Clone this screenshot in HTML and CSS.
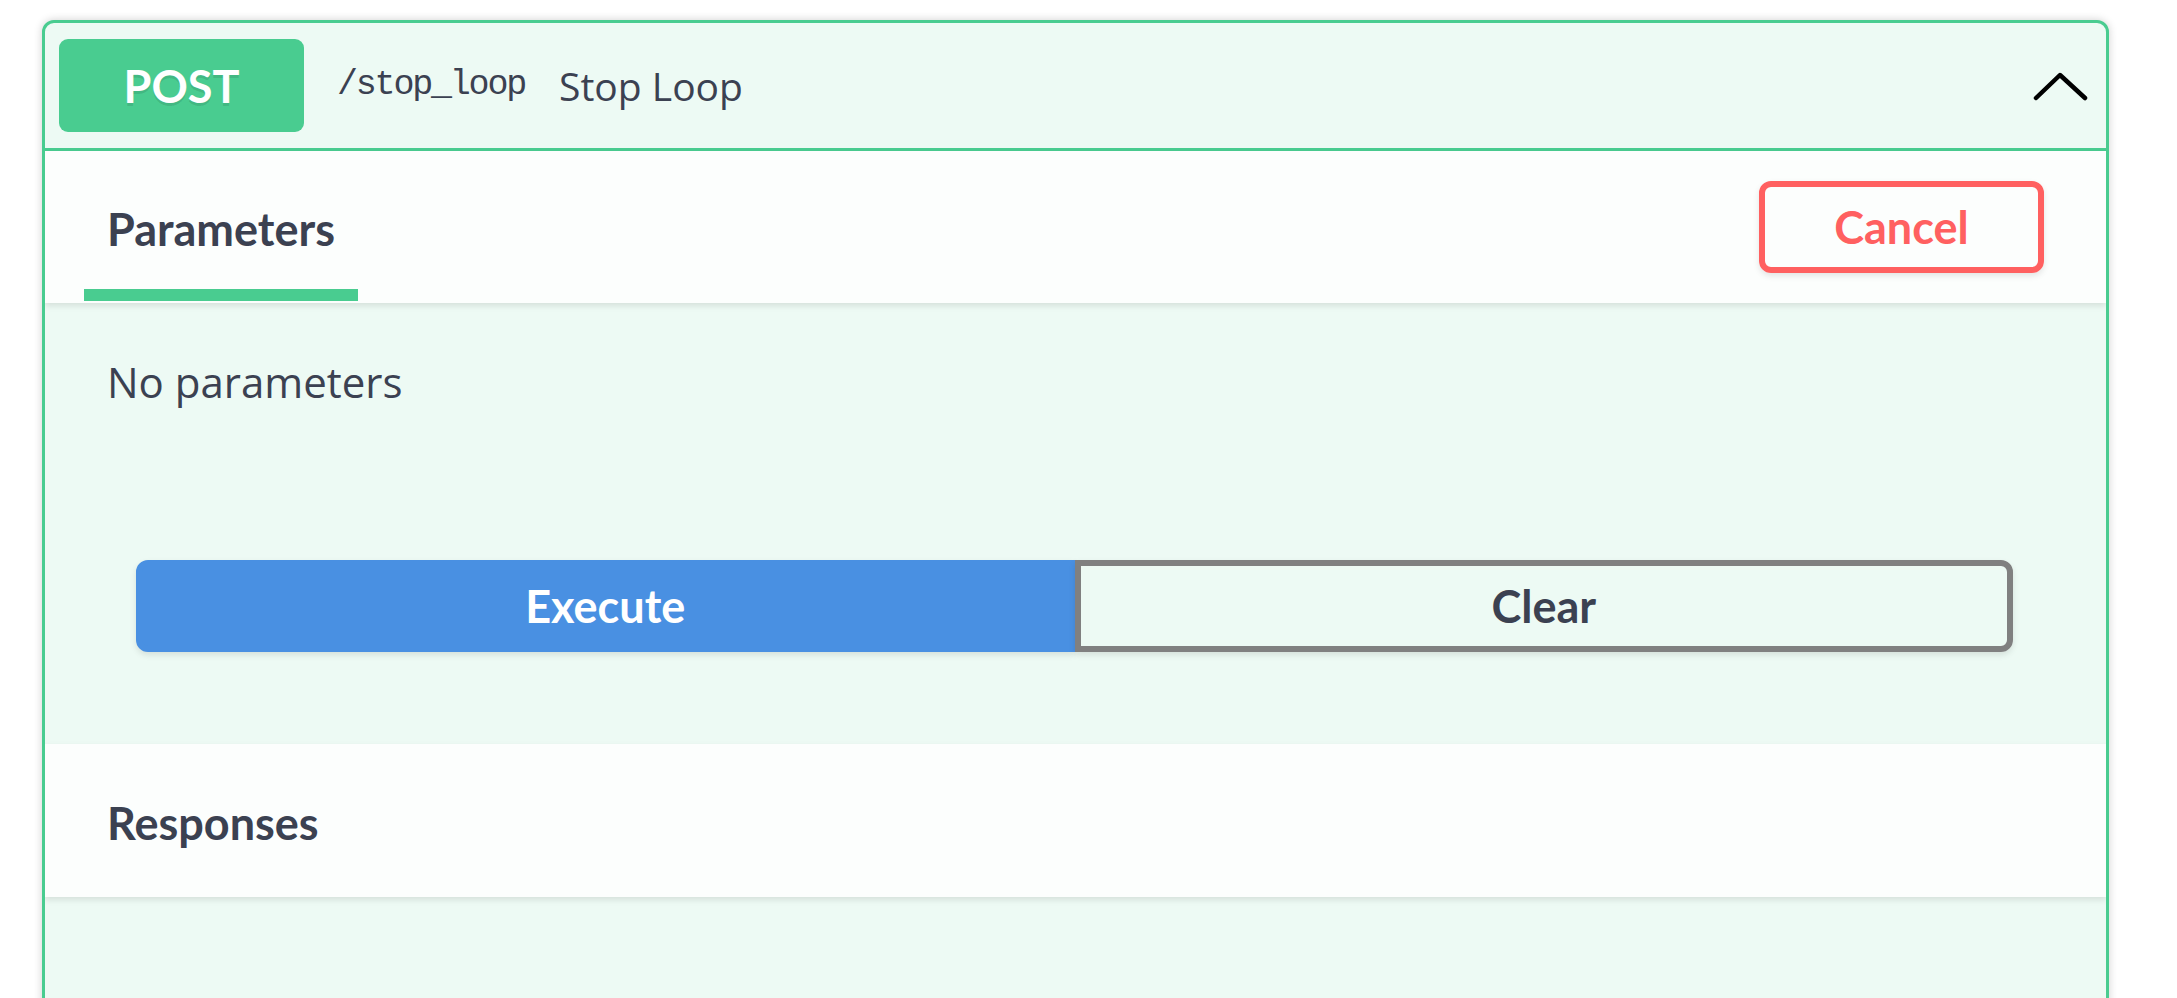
FILE: index.html
```html
<!DOCTYPE html>
<html lang="en">
<head>
<meta charset="utf-8">
<title>POST /stop_loop</title>
<link rel="stylesheet" href="styles.css">
</head>
<body>
<div class="opblock">
  <div class="summary">
    <span class="method">POST</span>
    <span class="path">/stop_loop</span>
    <span class="desc">Stop Loop</span>
    <svg class="arrow" width="56" height="30" viewBox="0 0 56 30" aria-hidden="true">
      <polyline points="3,26 27,3 52,26" fill="none" stroke="#000" stroke-width="4.5" stroke-linecap="round" stroke-linejoin="round"/>
    </svg>
  </div>
  <div class="section-header">
    <div class="tab">
      <span class="tab-label">Parameters</span>
      <span class="tab-line"></span>
    </div>
    <button class="btn cancel">Cancel</button>
  </div>
  <div class="section-body">
    <p class="no-params">No parameters</p>
    <div class="btn-group">
      <button class="btn execute">Execute</button>
      <button class="btn clear">Clear</button>
    </div>
  </div>
  <div class="section-header responses-header">
    <h4 class="title">Responses</h4>
  </div>
  <div class="responses-body"></div>
</div>
</body>
</html>
```
FILE: styles.css
```css
html, body {
  margin: 0;
  padding: 0;
  overflow: hidden;
  background: #ffffff;
}

body {
  font-family: "Open Sans", "Noto Sans", sans-serif;
  color: #3b4151;
}

.opblock {
  margin: 20px 68px 0 42px;
  border: 3px solid #49cc90;
  border-radius: 12px;
  background: #edfaf4;
  box-shadow: 0 0 9px rgba(0, 0, 0, 0.19);
  overflow: hidden;
}

.summary {
  display: flex;
  align-items: center;
  height: 125px;
  padding: 0 17px 0 14px;
  border-bottom: 3px solid #49cc90;
  box-sizing: content-box;
}

.method {
  display: flex;
  align-items: center;
  justify-content: center;
  width: 245px;
  height: 93px;
  border-radius: 9px;
  background: #49cc90;
  color: #ffffff;
  font-family: "Lato", "Open Sans", sans-serif;
  font-size: 45px;
  font-weight: 700;
  text-shadow: 0 3px 0 rgba(0, 0, 0, 0.1);
}

.path {
  margin-left: 33px;
  font-family: "Liberation Mono", "DejaVu Sans Mono", monospace;
  font-size: 35px;
  letter-spacing: -2.2px;
  color: #3b4151;
  margin-top: -2px;
}

.desc {
  margin-left: 34px;
  font-size: 39px;
  color: #3b4151;
  flex: 1;
}

.arrow {
  display: block;
  margin-top: 2px;
}

.section-header {
  display: flex;
  align-items: center;
  justify-content: space-between;
  background: rgba(255, 255, 255, 0.8);
  box-shadow: 0 3px 6px rgba(0, 0, 0, 0.1);
  position: relative;
}

.tab {
  display: flex;
  flex-direction: column;
  align-items: center;
  margin-left: 62px;
  padding: 50px 0 2px;
}

.tab-label {
  font-family: "Lato", "Open Sans", sans-serif;
  font-size: 45px;
  line-height: 57px;
  font-weight: 700;
  color: #3b4151;
}

.tab-line {
  display: block;
  width: 120%;
  height: 12px;
  margin-top: 31px;
  background: #49cc90;
  flex-shrink: 0;
}

.btn {
  font-family: "Lato", "Open Sans", sans-serif;
  font-size: 45px;
  font-weight: 700;
  box-sizing: border-box;
  height: 92px;
  border: 6px solid #808080;
  border-radius: 12px;
  background: transparent;
  box-shadow: 0 3px 6px rgba(0, 0, 0, 0.1);
  padding: 0;
  cursor: pointer;
}

.cancel {
  width: 285px;
  margin-right: 62px;
  border-color: #ff6060;
  color: #ff6060;
}

.section-body {
  padding: 50px 0 92px;
}

.no-params {
  margin: 0 0 0 62px;
  font-size: 42px;
  line-height: 57px;
  color: #3b4151;
}

.btn-group {
  display: flex;
  padding: 0 93px 0 91px;
  margin-top: 150px;
}

.btn-group .btn {
  flex: 1;
}

.execute {
  background: #4990e2;
  border-color: #4990e2;
  color: #ffffff;
  border-radius: 12px 0 0 12px;
}

.clear {
  color: #3b4151;
  border-radius: 0 12px 12px 0;
}

.responses-header {
  height: 153px;
}

.title {
  margin: 6px 0 0 62px;
  font-family: "Lato", "Open Sans", sans-serif;
  font-size: 45px;
  line-height: 57px;
  font-weight: 700;
  color: #3b4151;
}

.responses-body {
  height: 300px;
}
```
